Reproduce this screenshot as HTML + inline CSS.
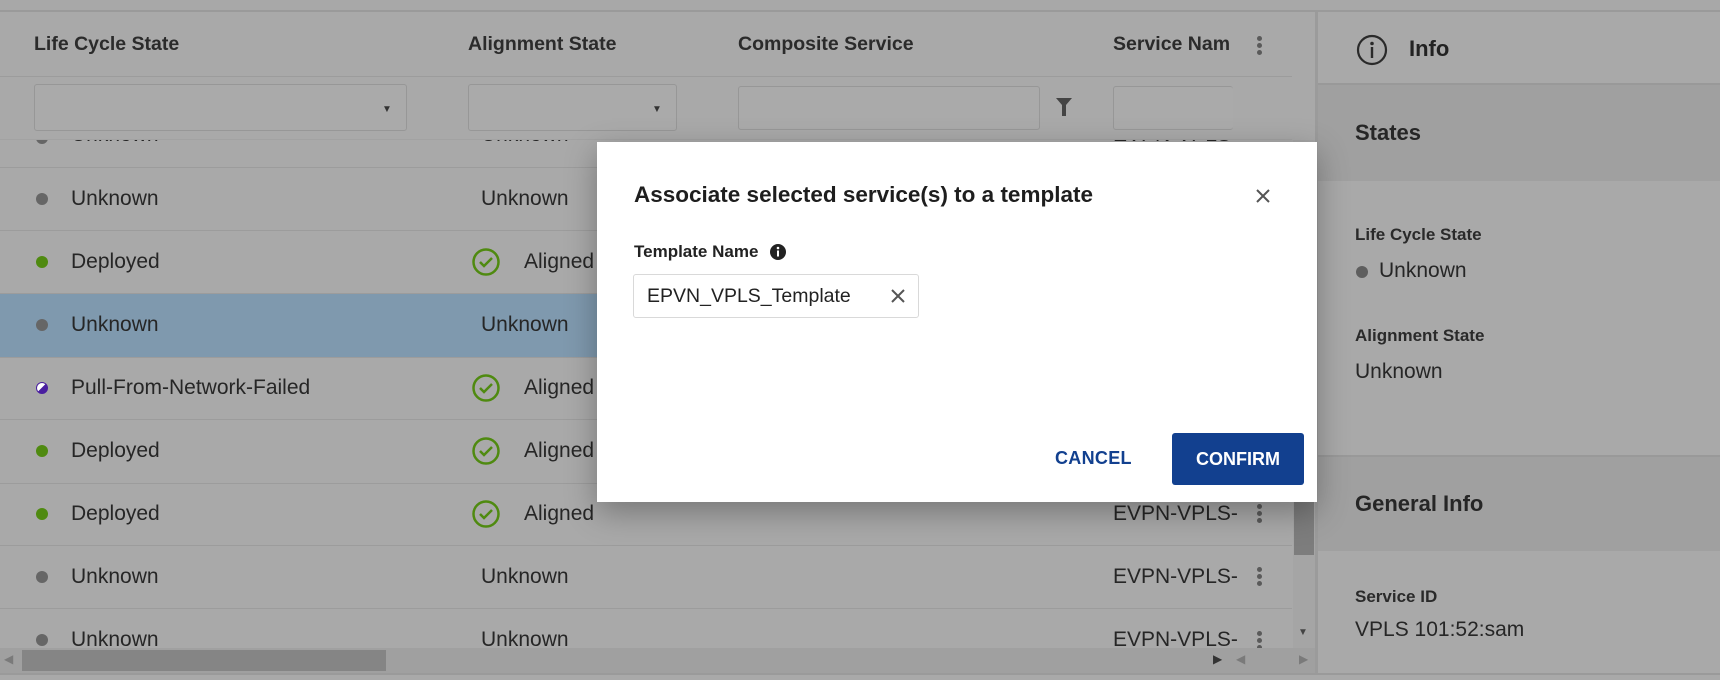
<!DOCTYPE html>
<html><head><meta charset="utf-8"><style>
*{margin:0;padding:0;box-sizing:border-box}
body{width:1720px;height:680px;overflow:hidden;background:#a9a9a9;font-family:"Liberation Sans",sans-serif;color:#222;position:relative}
.abs{position:absolute}
.t{position:absolute;white-space:nowrap}
.hdr{font-weight:bold;font-size:19.5px;color:#2b2b2b}
.row{font-size:21px;color:#262626}
.dot{position:absolute;width:12px;height:12px;border-radius:50%}
.line{position:absolute;height:1px;background:#9c9c9c}
.inp{position:absolute;border:1px solid #979797;border-radius:3px;background:#aaaaaa}
.keb{position:absolute;width:6px}
.keb i{display:block;width:5px;height:5px;border-radius:50%;background:#5a5a5a;margin-bottom:2px}
</style></head><body>
<div class="abs" style="left:0;top:0;width:1720px;height:12px;background:#a8a8a8;border-bottom:2px solid #9a9a9a"></div>
<!-- table header -->
<div class="t hdr" style="left:34px;top:33px">Life Cycle State</div>
<div class="t hdr" style="left:468px;top:33px">Alignment State</div>
<div class="t hdr" style="left:738px;top:33px">Composite Service</div>
<div class="abs" style="left:1113px;top:33px;width:117px;overflow:hidden"><span class="hdr" style="white-space:nowrap">Service Name</span></div>
<div class="keb" style="left:1257px;top:36px"><i></i><i></i><i></i></div>
<div class="line" style="left:0;top:76px;width:1292px"></div>
<div class="inp" style="left:34px;top:84px;width:373px;height:47px"></div>
<div class="t" style="left:382px;top:104px;font-size:10px;color:#333">▼</div>
<div class="inp" style="left:468px;top:84px;width:209px;height:47px"></div>
<div class="t" style="left:652px;top:104px;font-size:10px;color:#333">▼</div>
<div class="inp" style="left:738px;top:86px;width:302px;height:44px"></div>
<svg class="abs" style="left:1055px;top:97px" width="18" height="20"><path d="M1 1h16l-6 7v11h-4v-11z" fill="#444"/></svg>
<div class="inp" style="left:1113px;top:86px;width:120px;height:44px;border-right:none"></div>
<div class="line" style="left:0;top:139px;width:1292px;background:#a2a2a2"></div>
<!-- rows -->
<div class="abs" style="left:0;top:294px;width:1292px;height:63px;background:#7f99ae"></div>
<div class="line" style="left:0;top:167px;width:1292px"></div>
<div class="line" style="left:0;top:230px;width:1292px"></div>
<div class="line" style="left:0;top:293px;width:1292px"></div>
<div class="line" style="left:0;top:357px;width:1292px"></div>
<div class="line" style="left:0;top:419px;width:1292px"></div>
<div class="line" style="left:0;top:483px;width:1292px"></div>
<div class="line" style="left:0;top:545px;width:1292px"></div>
<div class="line" style="left:0;top:608px;width:1292px"></div>

<div class="abs" style="left:0;top:140px;width:1292px;height:27px;overflow:hidden">
<div class="dot" style="left:36px;top:-8px;background:#666"></div>
<div class="t row" style="left:71px;top:-17px">Unknown</div>
<div class="t row" style="left:481px;top:-17px">Unknown</div>
<div class="t row" style="left:1113px;top:-17px">EVPN-VPLS-</div>
</div>

<div class="dot" style="left:36px;top:193px;background:#666"></div><div class="t row" style="left:71px;top:187px">Unknown</div><div class="t row" style="left:481px;top:187px">Unknown</div>
<div class="dot" style="left:36px;top:256px;background:#4f8a10"></div><div class="t row" style="left:71px;top:250px">Deployed</div>
<div class="dot" style="left:36px;top:319px;background:#666"></div><div class="t row" style="left:71px;top:313px">Unknown</div><div class="t row" style="left:481px;top:313px">Unknown</div>
<div class="dot" style="left:36px;top:382px;background:linear-gradient(135deg,#fff 45%,#4a1fa0 50%);border:1.5px solid #4a1fa0"></div><div class="t row" style="left:71px;top:376px">Pull-From-Network-Failed</div>
<div class="dot" style="left:36px;top:445px;background:#4f8a10"></div><div class="t row" style="left:71px;top:439px">Deployed</div>
<div class="dot" style="left:36px;top:508px;background:#4f8a10"></div><div class="t row" style="left:71px;top:502px">Deployed</div>
<div class="dot" style="left:36px;top:571px;background:#666"></div><div class="t row" style="left:71px;top:565px">Unknown</div><div class="t row" style="left:481px;top:565px">Unknown</div>
<div class="abs" style="left:0;top:609px;width:1292px;height:39px;overflow:hidden">
<div class="dot" style="left:36px;top:25px;background:#666"></div><div class="t row" style="left:71px;top:19px">Unknown</div><div class="t row" style="left:481px;top:19px">Unknown</div><div class="t row" style="left:1113px;top:19px">EVPN-VPLS-</div><div class="keb" style="left:1257px;top:22px"><i></i><i></i><i></i></div>
</div>
<!-- aligned icons -->
<svg class="abs" style="left:0;top:0" width="600" height="560">
<g fill="none" stroke="#4f8a10" stroke-width="2.5">
<circle cx="486" cy="262" r="12.5"/><path d="M480 262l4 4 8-8"/>
<circle cx="486" cy="388" r="12.5"/><path d="M480 388l4 4 8-8"/>
<circle cx="486" cy="451" r="12.5"/><path d="M480 451l4 4 8-8"/>
<circle cx="486" cy="514" r="12.5"/><path d="M480 514l4 4 8-8"/>
</g></svg>
<div class="t row" style="left:524px;top:250px">Aligned</div>
<div class="t row" style="left:524px;top:376px">Aligned</div>
<div class="t row" style="left:524px;top:439px">Aligned</div>
<div class="t row" style="left:524px;top:502px">Aligned</div>
<div class="t row" style="left:1113px;top:502px">EVPN-VPLS-</div><div class="keb" style="left:1257px;top:504px"><i></i><i></i><i></i></div>
<div class="t row" style="left:1113px;top:565px">EVPN-VPLS-</div><div class="keb" style="left:1257px;top:567px"><i></i><i></i><i></i></div>
<!-- vertical scrollbar -->
<div class="abs" style="left:1293px;top:140px;width:22px;height:508px;background:#a5a5a5"></div>
<div class="abs" style="left:1294px;top:490px;width:20px;height:65px;background:#7d7d7d"></div>
<div class="t" style="left:1298px;top:627px;font-size:10px;color:#444">▼</div>
<!-- horizontal scrollbar -->
<div class="abs" style="left:0;top:648px;width:1315px;height:25px;background:#a0a0a0"></div>
<div class="abs" style="left:22px;top:650px;width:364px;height:21px;background:#858585"></div>
<div class="t" style="left:4px;top:652px;font-size:12px;color:#7a7a7a">◀</div>
<div class="t" style="left:1213px;top:652px;font-size:12px;color:#333">▶</div>
<div class="t" style="left:1236px;top:652px;font-size:12px;color:#7a7a7a">◀</div>
<div class="t" style="left:1299px;top:652px;font-size:12px;color:#7a7a7a">▶</div>
<div class="abs" style="left:0;top:673px;width:1720px;height:2px;background:#9a9a9a"></div>
<!-- right panel -->
<div class="abs" style="left:1315px;top:12px;width:3px;height:661px;background:#9b9b9b"></div>
<div class="abs" style="left:1318px;top:14px;width:402px;height:70px;background:#a9a9a9"></div>
<div class="abs" style="left:1318px;top:83px;width:402px;height:2px;background:#999"></div>
<svg class="abs" style="left:1356px;top:34px" width="32" height="32"><circle cx="16" cy="16" r="14" fill="none" stroke="#2a2a2a" stroke-width="2.2"/><circle cx="16" cy="9.5" r="1.8" fill="#2a2a2a"/><rect x="14.8" y="13" width="2.4" height="11" fill="#2a2a2a"/></svg>
<div class="t" style="left:1409px;top:36px;font-size:22px;font-weight:bold;color:#222">Info</div>
<div class="abs" style="left:1318px;top:85px;width:402px;height:96px;background:#a0a0a0"></div>
<div class="t" style="left:1355px;top:120px;font-size:22px;font-weight:bold;color:#262626">States</div>
<div class="t" style="left:1355px;top:225px;font-size:17px;font-weight:bold;color:#2a2a2a">Life Cycle State</div>
<div class="dot" style="left:1356px;top:266px;background:#5e5e5e"></div>
<div class="t row" style="left:1379px;top:259px">Unknown</div>
<div class="t" style="left:1355px;top:326px;font-size:17px;font-weight:bold;color:#2a2a2a">Alignment State</div>
<div class="t row" style="left:1355px;top:360px">Unknown</div>
<div class="abs" style="left:1318px;top:455px;width:402px;height:96px;background:#a0a0a0;border-top:2px solid #999"></div>
<div class="t" style="left:1355px;top:491px;font-size:22px;font-weight:bold;color:#262626">General Info</div>
<div class="t" style="left:1355px;top:587px;font-size:17px;font-weight:bold;color:#2a2a2a">Service ID</div>
<div class="t row" style="left:1355px;top:618px">VPLS 101:52:sam</div>
<!-- dialog -->
<div class="abs" style="left:597px;top:142px;width:720px;height:360px;background:#fff;box-shadow:0 10px 30px rgba(0,0,0,.3)">
<div class="t" style="left:37px;top:40px;font-size:22.5px;font-weight:bold;color:#1e1e1e">Associate selected service(s) to a template</div>
<svg class="abs" style="left:658px;top:46px" width="16" height="16"><path d="M2 2l12 12M14 2L2 14" stroke="#555" stroke-width="2"/></svg>
<div class="t" style="left:37px;top:100px;font-size:17px;font-weight:bold;color:#222">Template Name</div>
<svg class="abs" style="left:172px;top:101px" width="18" height="18"><circle cx="9" cy="9" r="8" fill="#222"/><circle cx="9" cy="5" r="1.3" fill="#fff"/><rect x="8" y="7.5" width="2" height="6" fill="#fff"/></svg>
<div class="abs" style="left:36px;top:132px;width:286px;height:44px;border:1px solid #d9d9d9;border-radius:3px"></div>
<div class="t" style="left:50px;top:143px;font-size:19.5px;color:#222">EPVN_VPLS_Template</div>
<svg class="abs" style="left:294px;top:147px" width="14" height="14"><path d="M1 1l12 12M13 1L1 13" stroke="#555" stroke-width="2"/></svg>
<div class="t" style="left:458px;top:306px;font-size:18px;font-weight:bold;color:#12408f;letter-spacing:.3px">CANCEL</div>
<div class="abs" style="left:575px;top:291px;width:132px;height:52px;background:#12408f;border-radius:3px;color:#fff;font-size:18px;font-weight:bold;text-align:center;line-height:52px">CONFIRM</div>
</div>
</body></html>
